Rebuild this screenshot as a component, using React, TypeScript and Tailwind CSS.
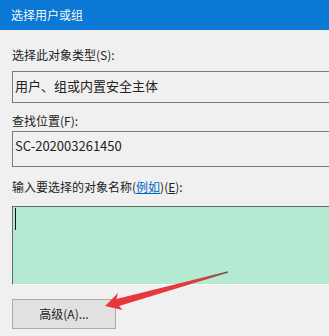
import React from "react";

export default function App() {
  const font = { fontFamily: '"Noto Sans CJK SC", "Noto Sans", sans-serif' };
  return (
    <div className="relative w-[329px] h-[336px] overflow-hidden bg-[#f0f0f0]" style={font}>
      <div className="h-[30px] bg-[#0a78d4] pl-[11px] flex items-center text-[12px] text-[#f4f8fc]">
        选择用户或组
      </div>
      <div className="flex h-[306px]">
        <div className="w-[2px] bg-[#f7f7f7]" />
        <div className="w-px bg-[#2f8fd8]" />
        <div className="flex-1 pl-[12px] flex flex-col text-[12px] leading-[16px] text-[#222]">
          <div className="mt-[17px]">选择此对象类型(<span>S</span>):</div>
          <div className="mt-[8px] h-[32px] w-[330px] border border-[#7a7a7a] pl-[2px] pt-[5px] text-[13px] leading-[18px]">
            用户、组或内置安全主体
          </div>
          <div className="mt-[10px]">查找位置(<span>F</span>):</div>
          <div className="mt-[2px] h-[36px] w-[330px] border border-[#7a7a7a] pl-[2px] pt-[5px] text-[13px] leading-[18px]">
            SC-202003261450
          </div>
          <div className="mt-[12px]">
            输入要选择的对象名称(<span className="text-[#0066cc] underline">例如</span>)(<span className="underline">E</span>):
          </div>
          <div className="mt-[11px] h-[79px] w-[330px] bg-[#b4e9d2] border-t border-l border-[#6b6b6b] border-b-[#ffffff] border-b pl-[2px] pt-[1px]">
            <div className="w-px h-[22px] bg-[#111]" />
          </div>
          <div className="mt-[14px] h-[30px] w-[104px] bg-[#e1e1e1] border border-[#adadad] flex items-center justify-center">
            高级(A)...
          </div>
        </div>
      </div>
      <svg className="absolute left-0 top-0 pointer-events-none" width="329" height="336" viewBox="0 0 329 336">
        <defs>
          <linearGradient id="g" x1="105" y1="306" x2="228" y2="272" gradientUnits="userSpaceOnUse">
            <stop offset="0" stopColor="#e8363b" />
            <stop offset="0.75" stopColor="#e23a3f" />
            <stop offset="1" stopColor="#6b5a55" />
          </linearGradient>
        </defs>
        <polygon
          points="105,306 118,293 116.4,299 228,271.3 228,272.7 119,306 122.8,310"
          fill="url(#g)"
        />
      </svg>
    </div>
  );
}
